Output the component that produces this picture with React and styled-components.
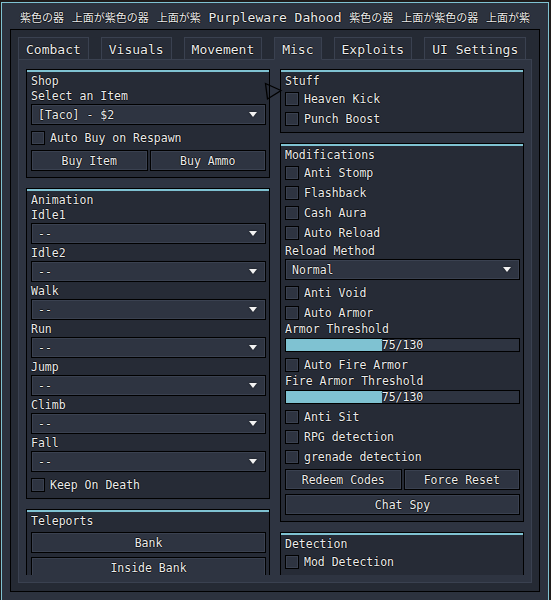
import React from 'react'
import styled, { createGlobalStyle } from 'styled-components'

const accent = '#7fc2d2'
const outline = '#3a4150'
const ctrlBg = '#2e3441'
const stroke = '-1px 0 rgba(0,0,0,.55), 1px 0 rgba(0,0,0,.55), 0 -1px rgba(0,0,0,.55), 0 1px rgba(0,0,0,.55)'

const GlobalStyle = createGlobalStyle`
  html, body {
    margin: 0;
    padding: 0;
    background: #1f1b1a;
    overflow: hidden;
  }
  body {
    font-family: "DejaVu Sans Mono", "Noto Sans CJK JP", monospace;
    color: #ececec;
  }
  * { box-sizing: border-box; }
`

const Root = styled.div`
  position: relative;
  width: 551px;
  height: 600px;
`

const Window = styled.div`
  margin: 2px 0 0 1px;
  width: 548px;
  height: 620px;
  border: 1px solid ${accent};
  background: #2c323e;
`

const TitleBar = styled.div`
  height: 26px;
  line-height: 28px;
  text-align: center;
  font-size: 13px;
  white-space: pre;
  overflow: hidden;
  text-shadow: ${stroke};
`

const Cjk = styled.span`
  font-family: "Noto Sans CJK JP", sans-serif;
  font-size: 11px;
`

const Inner = styled.div`
  margin: 0 8px;
  border: 1px solid #000;
  background: #252a34;
  padding: 7px 7px 8px;
`

const TabBar = styled.div`
  display: flex;
  gap: 12px;
  height: 23px;
  position: relative;
  z-index: 1;
`

const Tab = styled.div`
  padding: 2px 7px 0;
  border: 1px solid ${outline};
  border-bottom-color: ${p => (p.$active ? ctrlBg : outline)};
  background: ${p => (p.$active ? ctrlBg : '#282d38')};
  font-size: 13px;
  line-height: 19px;
  white-space: pre;
  text-shadow: ${stroke};
`

const TabPage = styled.div`
  margin-top: -1px;
  border: 1px solid ${outline};
  background: ${ctrlBg};
  padding: 9px 7px 7px;
  display: flex;
  gap: 10px;
`

const Column = styled.div`
  flex: 1;
  min-width: 0;
  height: 506px;
  display: flex;
  flex-direction: column;
  gap: 10px;
  overflow: hidden;
`

const GroupBox = styled.div`
  flex-shrink: 0;
  border: 1px solid #000;
  background: linear-gradient(${accent}, ${accent}) top / 100% 2px no-repeat, #262b36;
  padding: 2px 3px 6px 4px;
  display: flex;
  flex-direction: column;
  font-size: 11.5px;
  text-shadow: ${stroke};
`

const GroupTitle = styled.div`
  height: 16px;
  padding-top: 2px;
  line-height: 15px;
  white-space: pre;
`

const Slider = styled.div`
  position: relative;
  height: 14px;
  border: 1px solid #000;
  background: ${ctrlBg};
  display: flex;
  align-items: center;
  justify-content: center;
  font-size: 11.5px;
  color: #f4f4f4;
`

const SliderFill = styled.div`
  position: absolute;
  left: 0;
  top: 0;
  bottom: 0;
  background: ${accent};
`

const SliderText = styled.span`
  position: relative;
  line-height: 12px;
`

const Dropdown = styled.div`
  height: 21px;
  margin-top: 1px;
  border: 1px solid #000;
  background: ${ctrlBg};
  box-shadow: inset 0 0 0 1px ${outline};
  display: flex;
  align-items: center;
  justify-content: space-between;
  padding: 0 8px 0 6px;
  white-space: pre;
`

const CheckRow = styled.div`
  display: flex;
  align-items: center;
  gap: 5px;
  height: 14px;
  margin-top: 4px;
  white-space: pre;
  & + & { margin-top: 6px; }
  ${Slider} + & { margin-top: 6px; }
  ${Dropdown} + & { margin-top: 6px; }
`

const CheckBox = styled.div`
  width: 14px;
  height: 14px;
  flex-shrink: 0;
  border: 1px solid #000;
  background: ${ctrlBg};
  box-shadow: inset 0 0 0 1px ${outline};
`

const Label = styled.div`
  height: 16px;
  padding-top: ${p => (p.$tight ? 0 : 2)}px;
  line-height: 15px;
  white-space: pre;
  ${GroupTitle} + & { margin-top: -1px; }
  ${CheckRow} + & { margin-top: 2px; }
`

const Arrow = styled.span`
  width: 0;
  height: 0;
  border-left: 4px solid transparent;
  border-right: 4px solid transparent;
  border-top: 5px solid #f2f2f2;
  filter: drop-shadow(0 0 1px rgba(0,0,0,.6));
`

const ButtonRow = styled.div`
  display: flex;
  gap: 2px;
  margin-top: 5px;
  & + & { margin-top: 4px; }
  ${GroupTitle} + & { margin-top: 4px; }
`

const Button = styled.div`
  flex: 1;
  height: 21px;
  border: 1px solid #000;
  background: ${ctrlBg};
  box-shadow: inset 0 0 0 1px ${outline};
  display: flex;
  align-items: center;
  justify-content: center;
  white-space: pre;
`

const Cursor = styled.svg`
  position: absolute;
  left: 264px;
  top: 80px;
  z-index: 5;
`

const tabs = ['Combact', 'Visuals', 'Movement', 'Misc', 'Exploits', 'UI Settings']
const anims = ['Idle1', 'Idle2', 'Walk', 'Run', 'Jump', 'Climb', 'Fall']

const Check = ({ children }) => (
  <CheckRow>
    <CheckBox />
    <span>{children}</span>
  </CheckRow>
)

const Select = ({ value }) => (
  <Dropdown>
    <span>{value}</span>
    <Arrow />
  </Dropdown>
)

const Range = ({ label, value, max, fill }) => (
  <>
    <Label $tight>{label}</Label>
    <Slider>
      <SliderFill style={{ width: `${fill * 100}%` }} />
      <SliderText>{value}/{max}</SliderText>
    </Slider>
  </>
)

export default function App() {
  return (
    <Root>
      <GlobalStyle />
      <Window>
        <TitleBar>
          <Cjk>紫色の器</Cjk> <Cjk>上面が紫色の器</Cjk> <Cjk>上面が紫</Cjk> Purpleware Dahood <Cjk>紫色の器</Cjk> <Cjk>上面が紫色の器</Cjk> <Cjk>上面が紫</Cjk>
        </TitleBar>
        <Inner>
          <TabBar>
            {tabs.map(t => (
              <Tab key={t} $active={t === 'Misc'}>{t}</Tab>
            ))}
          </TabBar>
          <TabPage>
            <Column>
              <GroupBox>
                <GroupTitle>Shop</GroupTitle>
                <Label>Select an Item</Label>
                <Select value="[Taco] - $2" />
                <Check>Auto Buy on Respawn</Check>
                <ButtonRow>
                  <Button>Buy Item</Button>
                  <Button>Buy Ammo</Button>
                </ButtonRow>
              </GroupBox>
              <GroupBox>
                <GroupTitle>Animation</GroupTitle>
                {anims.map(a => (
                  <React.Fragment key={a}>
                    <Label>{a}</Label>
                    <Select value="--" />
                  </React.Fragment>
                ))}
                <Check>Keep On Death</Check>
              </GroupBox>
              <GroupBox>
                <GroupTitle>Teleports</GroupTitle>
                <ButtonRow><Button>Bank</Button></ButtonRow>
                <ButtonRow><Button>Inside Bank</Button></ButtonRow>
              </GroupBox>
            </Column>
            <Column>
              <GroupBox>
                <GroupTitle>Stuff</GroupTitle>
                <Check>Heaven Kick</Check>
                <Check>Punch Boost</Check>
              </GroupBox>
              <GroupBox>
                <GroupTitle>Modifications</GroupTitle>
                <Check>Anti Stomp</Check>
                <Check>Flashback</Check>
                <Check>Cash Aura</Check>
                <Check>Auto Reload</Check>
                <Label>Reload Method</Label>
                <Select value="Normal" />
                <Check>Anti Void</Check>
                <Check>Auto Armor</Check>
                <Range label="Armor Threshold" value={75} max={130} fill={0.41} />
                <Check>Auto Fire Armor</Check>
                <Range label="Fire Armor Threshold" value={75} max={130} fill={0.41} />
                <Check>Anti Sit</Check>
                <Check>RPG detection</Check>
                <Check>grenade detection</Check>
                <ButtonRow>
                  <Button>Redeem Codes</Button>
                  <Button>Force Reset</Button>
                </ButtonRow>
                <ButtonRow>
                  <Button>Chat Spy</Button>
                </ButtonRow>
              </GroupBox>
              <GroupBox>
                <GroupTitle>Detection</GroupTitle>
                <Check>Mod Detection</Check>
              </GroupBox>
            </Column>
          </TabPage>
        </Inner>
      </Window>
      <Cursor width="20" height="20" viewBox="0 0 20 20">
        <polygon points="1.5,1.5 17,8.5 3.5,17" fill="none" stroke="#000" strokeWidth="1.3" />
      </Cursor>
    </Root>
  )
}
